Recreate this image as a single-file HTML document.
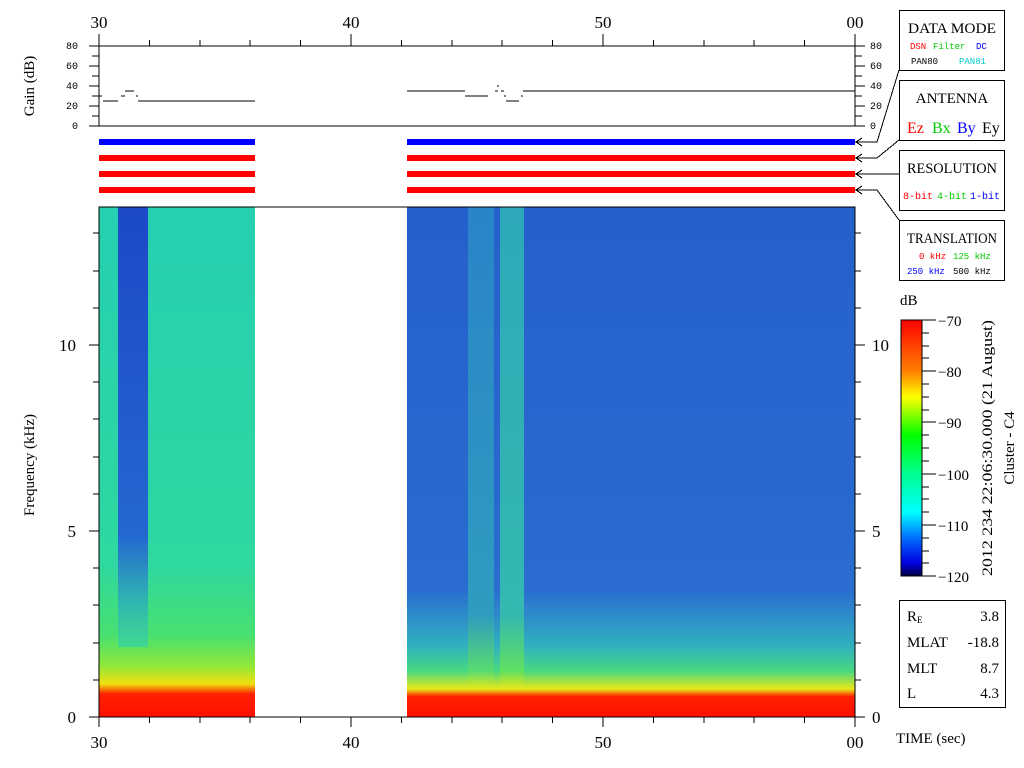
<!DOCTYPE html>
<html><head><meta charset="utf-8"><style>
html,body{margin:0;padding:0;background:#fff;width:1024px;height:768px;overflow:hidden}
svg{display:block}
text{font-family:"Liberation Serif",serif;fill:#000}
.m{font-family:"Liberation Mono",monospace}
</style></head><body>
<svg width="1024" height="768" viewBox="0 0 1024 768" xmlns="http://www.w3.org/2000/svg">
<defs>
<linearGradient id="lv" x1="0" y1="0" x2="0" y2="1">
<stop offset="0" stop-color="#26cfb0"/><stop offset="0.7" stop-color="#2ed8a0"/>
<stop offset="0.84" stop-color="#48e070"/><stop offset="0.9" stop-color="#90e838"/>
<stop offset="0.935" stop-color="#f0e010"/><stop offset="0.955" stop-color="#ff2000"/><stop offset="1" stop-color="#ff1000"/>
</linearGradient>
<linearGradient id="ls" x1="0" y1="0" x2="0" y2="1">
<stop offset="0" stop-color="#1c48c8"/><stop offset="0.75" stop-color="#2468d0"/><stop offset="0.9" stop-color="#30b8b0"/><stop offset="1" stop-color="#40d890"/>
</linearGradient>
<linearGradient id="rv" x1="0" y1="0" x2="0" y2="1">
<stop offset="0" stop-color="#2460cc"/><stop offset="0.75" stop-color="#2a6cd0"/>
<stop offset="0.86" stop-color="#30b0c0"/><stop offset="0.91" stop-color="#48d880"/>
<stop offset="0.945" stop-color="#e8e818"/><stop offset="0.96" stop-color="#ff2000"/><stop offset="1" stop-color="#ff1000"/>
</linearGradient>
<linearGradient id="rg" x1="0" y1="0" x2="0" y2="1">
<stop offset="0" stop-color="#2ea8b8"/><stop offset="0.8" stop-color="#34b8b0"/>
<stop offset="0.91" stop-color="#60e060"/><stop offset="0.945" stop-color="#e8e818"/><stop offset="0.96" stop-color="#ff2000"/><stop offset="1" stop-color="#ff1000"/>
</linearGradient>
<linearGradient id="rg2" x1="0" y1="0" x2="0" y2="1">
<stop offset="0" stop-color="#2a84c8"/><stop offset="0.8" stop-color="#2e9cc0"/>
<stop offset="0.91" stop-color="#58dc70"/><stop offset="0.945" stop-color="#e8e818"/><stop offset="0.96" stop-color="#ff2000"/><stop offset="1" stop-color="#ff1000"/>
</linearGradient>
<linearGradient id="cb" x1="0" y1="0" x2="0" y2="1">
<stop offset="0" stop-color="#ff0000"/><stop offset="0.2" stop-color="#ff8000"/><stop offset="0.3" stop-color="#ffff00"/>
<stop offset="0.45" stop-color="#00ff00"/><stop offset="0.6" stop-color="#00ff90"/><stop offset="0.75" stop-color="#00ffff"/>
<stop offset="0.85" stop-color="#0070ff"/><stop offset="0.95" stop-color="#0000e0"/><stop offset="1" stop-color="#000040"/>
</linearGradient>
</defs>

<!-- spectrogram -->
<rect x="99" y="207" width="156" height="510" fill="url(#lv)"/>
<rect x="118" y="207" width="30" height="440" fill="url(#ls)"/>
<rect x="407" y="207" width="448" height="510" fill="url(#rv)"/>
<rect x="468" y="207" width="26" height="510" fill="url(#rg2)"/>
<rect x="500" y="207" width="24" height="510" fill="url(#rg)"/>

<!-- bars -->
<g>
<rect x="99" y="139" width="156" height="6" fill="#0000ff"/><rect x="407" y="139" width="448" height="6" fill="#0000ff"/>
<rect x="99" y="155" width="156" height="6" fill="#ff0000"/><rect x="407" y="155" width="448" height="6" fill="#ff0000"/>
<rect x="99" y="171" width="156" height="6" fill="#ff0000"/><rect x="407" y="171" width="448" height="6" fill="#ff0000"/>
<rect x="99" y="187" width="156" height="6" fill="#ff0000"/><rect x="407" y="187" width="448" height="6" fill="#ff0000"/>
</g>

<g stroke="#000" stroke-width="1" fill="none" shape-rendering="crispEdges">
<path d="M99 34V126H855V34M99 46H855"/>
<path d="M99 34v12M351 34v12M603 34v12M855 34v12"/>
<path d="M149.5 40v6M200 40v6M250 40v6M300.5 40v6M401.5 40v6M452 40v6M502 40v6M552.5 40v6M653.5 40v6M704 40v6M754 40v6M804.5 40v6"/>
<path d="M89 46h10M92 56h7M89 66h10M92 76h7M89 86h10M92 96h7M89 106h10M92 116h7M89 126h10"/>
<path d="M855 46h10M855 56h7M855 66h10M855 76h7M855 86h10M855 96h7M855 106h10M855 116h7M855 126h10"/>
<path d="M103 101h15M121 96h4M125 91h9M136 96h2M138 101h117"/>
<path d="M407 91h58M465 96h23M497 86h2M495 91h3M501 91h3M506 101h13M504 96h2M521 96h2M523 91h332"/>
<path d="M99 96h3"/>
<path d="M99 207H855V717H99Z"/>
<path d="M99 717v10M351 717v10M603 717v10M855 717v10"/>
<path d="M149.5 717v6M200 717v6M250 717v6M300.5 717v6M401.5 717v6M452 717v6M502 717v6M552.5 717v6M653.5 717v6M704 717v6M754 717v6M804.5 717v6"/>
<path d="M89 717h10M93 680h6M93 643h6M93 605h6M93 568h6M89 531h10M93 494h6M93 457h6M93 419h6M93 382h6M89 345h10M93 308h6M93 271h6M93 233h6"/>
<path d="M855 717h10M855 680h6M855 643h6M855 605h6M855 568h6M855 531h10M855 494h6M855 457h6M855 419h6M855 382h6M855 345h10M855 308h6M855 271h6M855 233h6"/>
<path d="M855 142h22L899 70M855 158h22L899 140M855 174h44M855 190h22L899 220"/>
<path d="M862 138l-6 4 6 4M862 154l-6 4 6 4M862 170l-6 4 6 4M862 186l-6 4 6 4"/>
<rect x="899.5" y="10.5" width="105" height="60"/>
<rect x="899.5" y="80.5" width="105" height="60"/>
<rect x="899.5" y="150.5" width="105" height="60"/>
<rect x="899.5" y="220.5" width="105" height="60"/>
<rect x="899.5" y="600.5" width="106" height="107"/>
<path d="M922 320h14M922 371h14M922 422h14M922 474h14M922 525h14M922 576h14M922 333h7M922 346h7M922 358h7M922 384h7M922 397h7M922 410h7M922 435h7M922 448h7M922 461h7M922 487h7M922 499h7M922 512h7M922 538h7M922 551h7M922 563h7"/>
</g>
<rect x="901" y="320" width="21" height="256" fill="url(#cb)" stroke="#000" stroke-width="1"/>

<g font-size="17" text-anchor="middle">
<text x="99" y="28">30</text><text x="351" y="28">40</text><text x="603" y="28">50</text><text x="855" y="28">00</text>
<text x="99" y="748">30</text><text x="351" y="748">40</text><text x="603" y="748">50</text><text x="855" y="748">00</text>
</g>
<g font-size="10" text-anchor="end">
<text x="78" y="49" class="m">80</text><text x="78" y="69" class="m">60</text><text x="78" y="89" class="m">40</text><text x="78" y="109" class="m">20</text><text x="78" y="129" class="m">0</text>
</g>
<g font-size="10">
<text x="870" y="49" class="m">80</text><text x="870" y="69" class="m">60</text><text x="870" y="89" class="m">40</text><text x="870" y="109" class="m">20</text><text x="870" y="129" class="m">0</text>
</g>
<g font-size="17" text-anchor="end">
<text x="76" y="723">0</text><text x="76" y="537">5</text><text x="76" y="351">10</text>
</g>
<g font-size="17">
<text x="872" y="723">0</text><text x="872" y="537">5</text><text x="872" y="351">10</text>
</g>
<text transform="translate(34,86) rotate(-90)" font-size="15" text-anchor="middle">Gain (dB)</text>
<text transform="translate(34,465) rotate(-90)" font-size="15" text-anchor="middle">Frequency (kHz)</text>

<text x="952" y="33" font-size="15" text-anchor="middle" textLength="88" lengthAdjust="spacingAndGlyphs">DATA MODE</text>
<text x="910" y="49" font-size="9" class="m" style="fill:#f00">DSN</text>
<text x="933" y="49" font-size="9" class="m" style="fill:#0c0">Filter</text>
<text x="976" y="49" font-size="9" class="m" style="fill:#00f">DC</text>
<text x="911" y="64" font-size="9" class="m">PAN80</text>
<text x="959" y="64" font-size="9" class="m" style="fill:#0cc">PAN81</text>

<text x="952" y="103" font-size="15" text-anchor="middle">ANTENNA</text>
<text x="907" y="133" font-size="16" style="fill:#f00">Ez</text>
<text x="932" y="133" font-size="16" style="fill:#0c0">Bx</text>
<text x="957" y="133" font-size="16" style="fill:#00f">By</text>
<text x="982" y="133" font-size="16">Ey</text>

<text x="952" y="173" font-size="15" text-anchor="middle" textLength="90" lengthAdjust="spacingAndGlyphs">RESOLUTION</text>
<text x="903" y="199" font-size="10" class="m" style="fill:#f00">8-bit</text>
<text x="937" y="199" font-size="10" class="m" style="fill:#0c0">4-bit</text>
<text x="970" y="199" font-size="10" class="m" style="fill:#00f">1-bit</text>

<text x="952" y="243" font-size="15" text-anchor="middle" textLength="90" lengthAdjust="spacingAndGlyphs">TRANSLATION</text>
<text x="919" y="259" font-size="9" class="m" style="fill:#f00">0 kHz</text>
<text x="953" y="259" font-size="9" class="m" style="fill:#0c0">125 kHz</text>
<text x="907" y="274" font-size="9" class="m" style="fill:#00f">250 kHz</text>
<text x="953" y="274" font-size="9" class="m">500 kHz</text>

<text x="900" y="305" font-size="15">dB</text>
<g font-size="15">
<text x="938" y="326">−70</text><text x="938" y="377">−80</text><text x="938" y="428">−90</text>
<text x="938" y="480">−100</text><text x="938" y="531">−110</text><text x="938" y="582">−120</text>
</g>
<text transform="translate(992,448) rotate(-90)" font-size="15" text-anchor="middle" textLength="256" lengthAdjust="spacingAndGlyphs">2012 234 22:06:30.000 (21 August)</text>
<text transform="translate(1014,448) rotate(-90)" font-size="15" text-anchor="middle">Cluster - C4</text>

<g font-size="15">
<text x="907" y="621">R<tspan font-size="9" dy="2">E</tspan></text><text x="999" y="621" text-anchor="end">3.8</text>
<text x="907" y="647">MLAT</text><text x="999" y="647" text-anchor="end">-18.8</text>
<text x="907" y="673">MLT</text><text x="999" y="673" text-anchor="end">8.7</text>
<text x="907" y="698">L</text><text x="999" y="698" text-anchor="end">4.3</text>
<text x="896" y="743">TIME (sec)</text>
</g>
</svg>
</body></html>
